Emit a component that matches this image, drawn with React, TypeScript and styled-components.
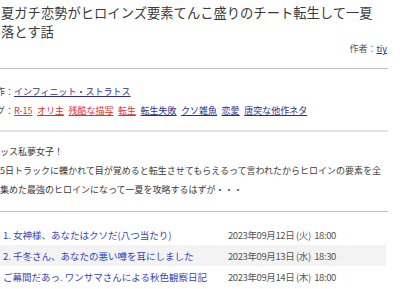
import React from "react"
import styled, { createGlobalStyle } from "styled-components"

const GlobalStyle = createGlobalStyle`
  html, body {
    margin: 0;
    padding: 0;
    background: #fff;
    overflow: hidden;
  }
  body {
    font-family: "Noto Sans CJK JP", "Noto Sans", sans-serif;
    color: #333;
  }
`

type Tag = { name: string; warn?: boolean }

const tags: Tag[] = [
  { name: "R-15", warn: true },
  { name: "オリ主", warn: true },
  { name: "残酷な描写", warn: true },
  { name: "転生", warn: true },
  { name: "転生失敗" },
  { name: "クソ雑魚" },
  { name: "恋愛" },
  { name: "唐突な他作ネタ" },
]

const chapters = [
  { title: "1. 女神様、あなたはクソだ(八つ当たり)", date: "2023年09月12日 (火)  18:00" },
  { title: "2. 千冬さん、あなたの悪い噂を耳にしました", date: "2023年09月13日 (水)  18:30" },
  { title: "ご幕間だあっ. ワンサマさんによる秋色観察日記", date: "2023年09月14日 (木)  18:00" },
]

const App: React.FC = () => {
  return (
    <>
      <GlobalStyle />
      <StyledPage>
        <StyledTitle>
          夏ガチ恋勢がヒロインズ要素てんこ盛りのチート転生して一夏
          <br />
          落とす話
        </StyledTitle>
        <StyledAuthor>
          作者：<StyledLink href="#">tiy</StyledLink>
        </StyledAuthor>
        <StyledRule />
        <StyledInfo>
          <StyledInfoRow>
            <StyledLabel>原作：</StyledLabel>
            <StyledLink href="#">インフィニット・ストラトス</StyledLink>
          </StyledInfoRow>
          <StyledInfoRow>
            <StyledLabel>タグ：</StyledLabel>
            {tags.map((t) => (
              <StyledTag key={t.name} href="#" $warn={t.warn}>
                {t.name}
              </StyledTag>
            ))}
          </StyledInfoRow>
        </StyledInfo>
        <StyledRule $light />
        <StyledSummary>
          ッス私夢女子！
          <br />
          5日トラックに轢かれて目が覚めると転生させてもらえるって言われたからヒロインの要素を全
          <br />
          集めた最強のヒロインになって一夏を攻略するはずが・・・
        </StyledSummary>
        <StyledRule />
        <StyledList>
          {chapters.map((c, i) => (
            <StyledChapter key={c.title} $striped={i % 2 === 1}>
              <StyledChapterLink href="#">{c.title}</StyledChapterLink>
              <StyledDate>{c.date}</StyledDate>
            </StyledChapter>
          ))}
        </StyledList>
      </StyledPage>
    </>
  )
}

const StyledPage = styled.div`
  width: 388px;
  display: flex;
  flex-direction: column;
`

const StyledTitle = styled.h1`
  margin: 0;
  padding: 3px 0 0 1px;
  font-size: 13.3px;
  line-height: 19px;
  font-weight: 400;
  color: #3a3a3a;
  white-space: nowrap;
`

const StyledAuthor = styled.div`
  text-align: right;
  font-size: 9px;
  line-height: 15px;
  color: #555;
  padding-right: 1px;
`

const StyledLink = styled.a`
  color: #2a2f8f;
  text-decoration: underline;
`

const StyledRule = styled.div<{ $light?: boolean }>`
  margin-top: ${(p) => (p.$light ? "10px" : "12px")};
  height: 0;
  border-top: ${(p) => (p.$light ? "2px solid #e2e2e2" : "1px solid #c4c4c4")};
`

const StyledInfo = styled.div`
  margin-top: 13px;
  display: flex;
  flex-direction: column;
`

const StyledInfoRow = styled.div`
  margin-left: -13px;
  font-size: 9px;
  line-height: 19px;
  white-space: nowrap;
  color: #444;
`

const StyledLabel = styled.span`
  color: #444;
`

const StyledTag = styled.a<{ $warn?: boolean }>`
  margin-right: 4.5px;
  color: ${(p) => (p.$warn ? "#e0312f" : "#2a2f8f")};
  text-decoration: underline;
`

const StyledSummary = styled.div`
  margin-top: 10px;
  font-size: 9px;
  line-height: 19px;
  color: #3a3a3a;
  white-space: nowrap;
`

const StyledList = styled.div`
  margin-top: 12px;
  width: 386px;
  display: flex;
  flex-direction: column;
`

const StyledChapter = styled.div<{ $striped?: boolean }>`
  display: flex;
  align-items: center;
  height: 21px;
  background: ${(p) => (p.$striped ? "#f3f3f3" : "transparent")};
  font-size: 9.5px;
`

const StyledChapterLink = styled.a`
  width: 225px;
  padding-left: 3px;
  color: #3344bb;
  text-decoration: none;
  white-space: nowrap;
`

const StyledDate = styled.span`
  color: #555;
  white-space: pre;
  letter-spacing: -0.4px;
`

export default App
